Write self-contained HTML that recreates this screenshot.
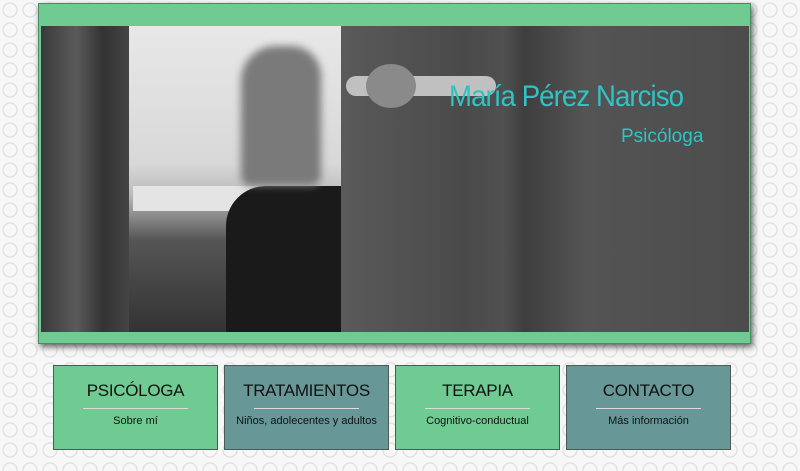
<!DOCTYPE html>
<html><head><meta charset="utf-8"><style>
body{margin:0;width:800px;height:471px;overflow:hidden;background-color:#f7f7f7;
background-image:radial-gradient(circle at 10px 10px,transparent 6px,#d8d8d8 7px,transparent 8px);background-size:20px 20px;font-family:"Liberation Sans",sans-serif;position:relative}
.hdr{position:absolute;left:38px;top:3px;width:713px;height:341px;background:#6fcb91;box-shadow:2px 3px 6px rgba(0,0,0,.6);border:1px solid #4a8a62;box-sizing:border-box}
.photo{position:absolute;left:2px;top:22px;width:708px;height:306px;overflow:hidden;background:#4d4d4d}
.p{position:absolute}
.box{position:absolute;top:365px;width:165px;height:85px;border:1px solid #4b5a55;box-sizing:border-box;text-align:center;color:#111}
.box h2{margin:15px 0 0;font-weight:normal;font-size:17px;letter-spacing:-.3px}
.box hr{width:64%;border:0;border-top:1px solid #ddd;margin:7px auto 6px}
.box p{margin:0;font-size:11px}
.g{background:#6fcb91}.t{background:#679797}
</style></head><body>
<div class="hdr"><div class="photo">
<div class="p" style="left:0;top:0;width:88px;height:306px;background:linear-gradient(90deg,#3a3a3a,#5a5a5a 40%,#333 70%,#444)"></div>
<div class="p" style="left:88px;top:0;width:212px;height:306px;background:linear-gradient(180deg,#e8e8e8,#d8d8d8 45%,#bbb 55%,#555 70%,#333)"></div>
<div class="p" style="left:92px;top:160px;width:180px;height:25px;background:#e4e4e4"></div>
<div class="p" style="left:185px;top:160px;width:115px;height:146px;background:#1a1a1a;border-radius:40px 0 0 0"></div>
<div class="p" style="left:200px;top:20px;width:80px;height:140px;background:#7a7a7a;border-radius:35px 30px 10px 10px;filter:blur(4px)"></div>
<div class="p" style="left:300px;top:0;width:408px;height:306px;background:linear-gradient(90deg,#5a5a5a,#4a4a4a 30%,#505050 40%,#3e3e3e 45%,#545454 60%,#4c4c4c)"></div>
<div class="p" style="left:305px;top:50px;width:150px;height:20px;background:#c0c0c0;border-radius:14px"></div>
<div class="p" style="left:325px;top:38px;width:50px;height:44px;background:#8a8a8a;border-radius:50%"></div>
<div class="p" style="left:408px;top:54px;font-size:30px;color:#2fc4c4;letter-spacing:-1px;white-space:nowrap;transform:scaleX(.92);transform-origin:left">María Pérez Narciso</div>
<div class="p" style="left:580px;top:100px;font-size:19px;color:#2fc4c4;white-space:nowrap">Psicóloga</div>
</div></div>
<div class="box g" style="left:53px"><h2>PSICÓLOGA</h2><hr><p>Sobre mí</p></div>
<div class="box t" style="left:224px"><h2>TRATAMIENTOS</h2><hr><p>Niños, adolecentes y adultos</p></div>
<div class="box g" style="left:395px"><h2>TERAPIA</h2><hr><p>Cognitivo-conductual</p></div>
<div class="box t" style="left:566px"><h2>CONTACTO</h2><hr><p>Más información</p></div>
</body></html>
